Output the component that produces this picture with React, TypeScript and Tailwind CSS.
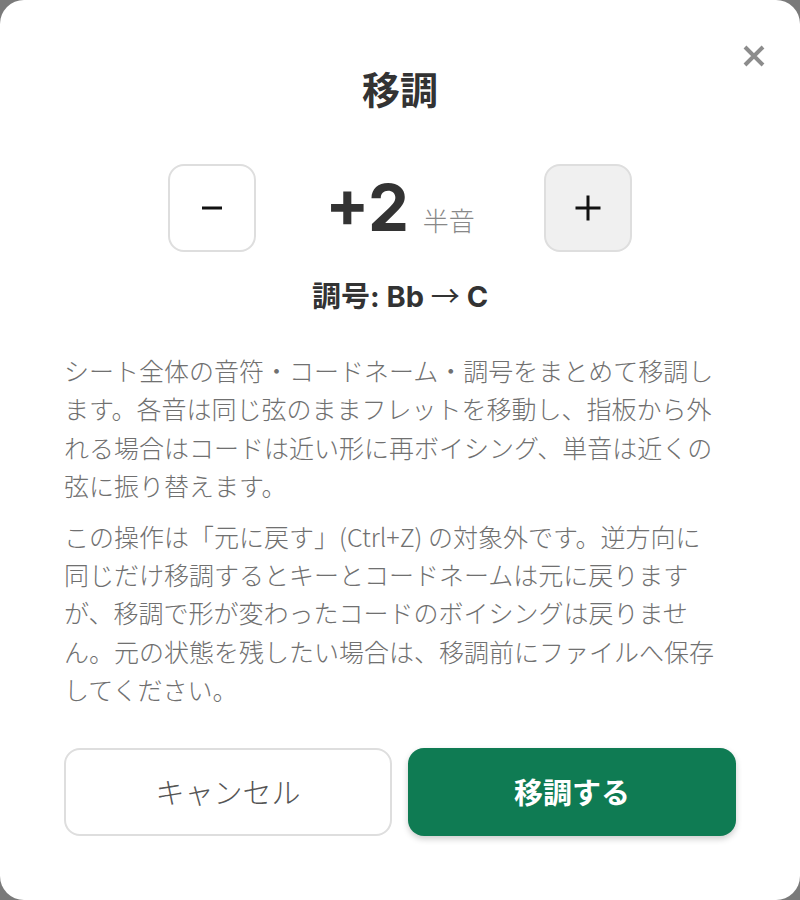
import React from "react";

const LAT = 'Inter, "Noto Sans CJK JP", sans-serif';
const JP = '"Noto Sans CJK JP", Inter, sans-serif';

export default function App() {
  return (
    <div className="w-[800px] h-[900px] bg-[#7a7a7a]" style={{ fontFamily: JP }}>
      <div className="relative w-full h-full bg-white rounded-[24px] px-16 pt-[60px] pb-16 flex flex-col">
        <button className="absolute top-[43px] right-[33px] w-[26px] h-[26px] flex items-center justify-center">
          <svg width="24" height="24" viewBox="0 0 24 24">
            <path d="M3 3 L21 21 M21 3 L3 21" stroke="#8c8c8c" strokeWidth="4" strokeLinecap="butt" />
          </svg>
        </button>

        <h1 className="text-center text-[38px] leading-[56px] font-bold text-[#333]">移調</h1>

        <div className="mt-[48px] flex items-center justify-center">
          <button className="w-[88px] h-[88px] rounded-[16px] border-2 border-[#dedede] bg-white flex items-center justify-center">
            <svg width="22" height="4" viewBox="0 0 22 4">
              <rect x="1" y="0.5" width="20" height="3" fill="#111" />
            </svg>
          </button>
          <div className="w-[288px] flex items-baseline justify-center gap-[14px] text-[#333]">
            <span className="text-[65px] leading-[88px] font-bold" style={{ fontFamily: LAT }}>
              +2
            </span>
            <span className="text-[26px] font-light text-[#888]">半音</span>
          </div>
          <button className="w-[88px] h-[88px] rounded-[16px] border-2 border-[#dedede] bg-[#f0f0f0] flex items-center justify-center">
            <svg width="26" height="26" viewBox="0 0 26 26">
              <rect x="0.5" y="11.5" width="25" height="3" fill="#111" />
              <rect x="11.5" y="0.5" width="3" height="25" fill="#111" />
            </svg>
          </button>
        </div>

        <div className="mt-[22px] text-center text-[29px] leading-[40px] font-bold text-[#333]">
          調号
          <span style={{ fontFamily: LAT }}>
            : Bb <span className="font-normal" style={{ fontFamily: JP }}>→</span> C
          </span>
        </div>

        <div className="mt-[34px] text-[25px] leading-[38.4px] font-light text-[#707070]">
          <p>
            シート全体の音符・コードネーム・調号をまとめて移調し
            <br />
            ます。各音は同じ弦のままフレットを移動し、指板から外
            <br />
            れる場合はコードは近い形に再ボイシング、単音は近くの
            <br />
            弦に振り替えます。
          </p>
          <p className="mt-3">
            この操作は「元に戻す」(Ctrl+Z) の対象外です。逆方向に
            <br />
            同じだけ移調するとキーとコードネームは元に戻ります
            <br />
            が、移調で形が変わったコードのボイシングは戻りませ
            <br />
            ん。元の状態を残したい場合は、移調前にファイルへ保存
            <br />
            してください。
          </p>
        </div>

        <div className="mt-auto grid grid-cols-2 gap-4">
          <button className="h-[88px] rounded-[16px] border-2 border-[#dedede] bg-white text-[29px] font-light text-[#555]">
            キャンセル
          </button>
          <button className="h-[88px] rounded-[16px] bg-[#0f7b53] text-[29px] font-bold text-white shadow-[0_3px_6px_rgba(0,0,0,0.2)]">
            移調する
          </button>
        </div>
      </div>
    </div>
  );
}
